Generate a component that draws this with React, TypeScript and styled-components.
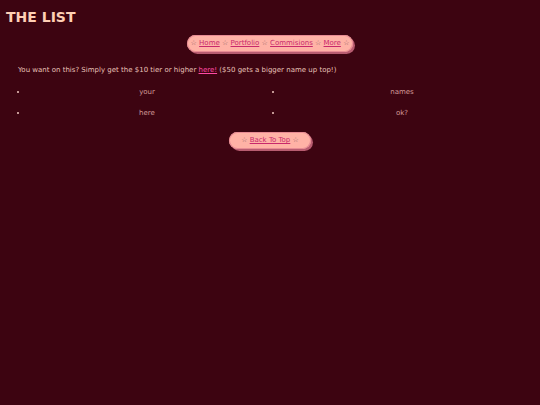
import React from "react";
import styled, { createGlobalStyle } from "styled-components";

const GlobalStyle = createGlobalStyle`
  html, body {
    margin: 0;
    padding: 0;
    background-color: #3d0411;
  }
  body {
    font-family: "DejaVu Sans", Verdana, sans-serif;
    font-size: 7px;
    color: #e8c2b8;
  }
`;

const Page = styled.div`
  padding: 8px 6px;
  display: flex;
  flex-direction: column;
`;

const Title = styled.h1`
  margin: 0;
  font-size: 14px;
  font-weight: bold;
  color: #ffcfb4;
  line-height: 18px;
`;

const PillRow = styled.div<{ $top: number }>`
  display: flex;
  justify-content: center;
  margin: ${(p) => p.$top}px 0 0;
`;

const Pill = styled.nav<{ $pad: number }>`
  display: block;
  background: #ffb2a6;
  border-radius: 999px;
  padding: 0 ${(p) => p.$pad}px;
  height: 17px;
  line-height: 17px;
  white-space: nowrap;
  color: #a8606a;
  box-shadow: 2px 2px 0 #b85c70, inset 0 0 0 1px #e88c94;
`;

const Star = styled.span`
  font-family: "DejaVu Sans", sans-serif;
  font-size: 7px;
  color: #8c5a5e;
`;

const NavLink = styled.a`
  color: #c8286c;
  text-decoration: underline;
`;

const Intro = styled.p`
  margin: 12px 0 0 12px;
  line-height: 12px;
`;

const HereLink = styled.a`
  color: #ff4aa4;
  text-decoration: underline;
`;

const Names = styled.ul`
  margin: 11px 0 0;
  padding: 0 13px 0 22px;
  display: grid;
  grid-template-columns: 1fr 1fr;
  column-gap: 17px;
  row-gap: 11px;
  list-style: disc;
  color: #d49a98;
`;

const Name = styled.li`
  text-align: center;
  line-height: 10px;
  &::marker {
    color: #f0c8c0;
  }
`;

const items = ["your", "names", "here", "ok?"];
const links = ["Home", "Portfolio", "Commisions", "More"];

export default function App() {
  return (
    <>
      <GlobalStyle />
      <Page>
        <Title>THE LIST</Title>
        <PillRow $top={9}>
          <Pill $pad={4}>
            <Star>☆</Star>
            {links.map((l) => (
              <React.Fragment key={l}>
                {" "}
                <NavLink href="#">{l}</NavLink> <Star>☆</Star>
              </React.Fragment>
            ))}
          </Pill>
        </PillRow>
        <Intro>
          You want on this? Simply get the $10 tier or higher{" "}
          <HereLink href="#">here!</HereLink> ($50 gets a bigger name up top!)
        </Intro>
        <Names>
          {items.map((n) => (
            <Name key={n}>{n}</Name>
          ))}
        </Names>
        <PillRow $top={14}>
          <Pill $pad={12}>
            <Star>☆</Star> <NavLink href="#">Back To Top</NavLink> <Star>☆</Star>
          </Pill>
        </PillRow>
      </Page>
    </>
  );
}
